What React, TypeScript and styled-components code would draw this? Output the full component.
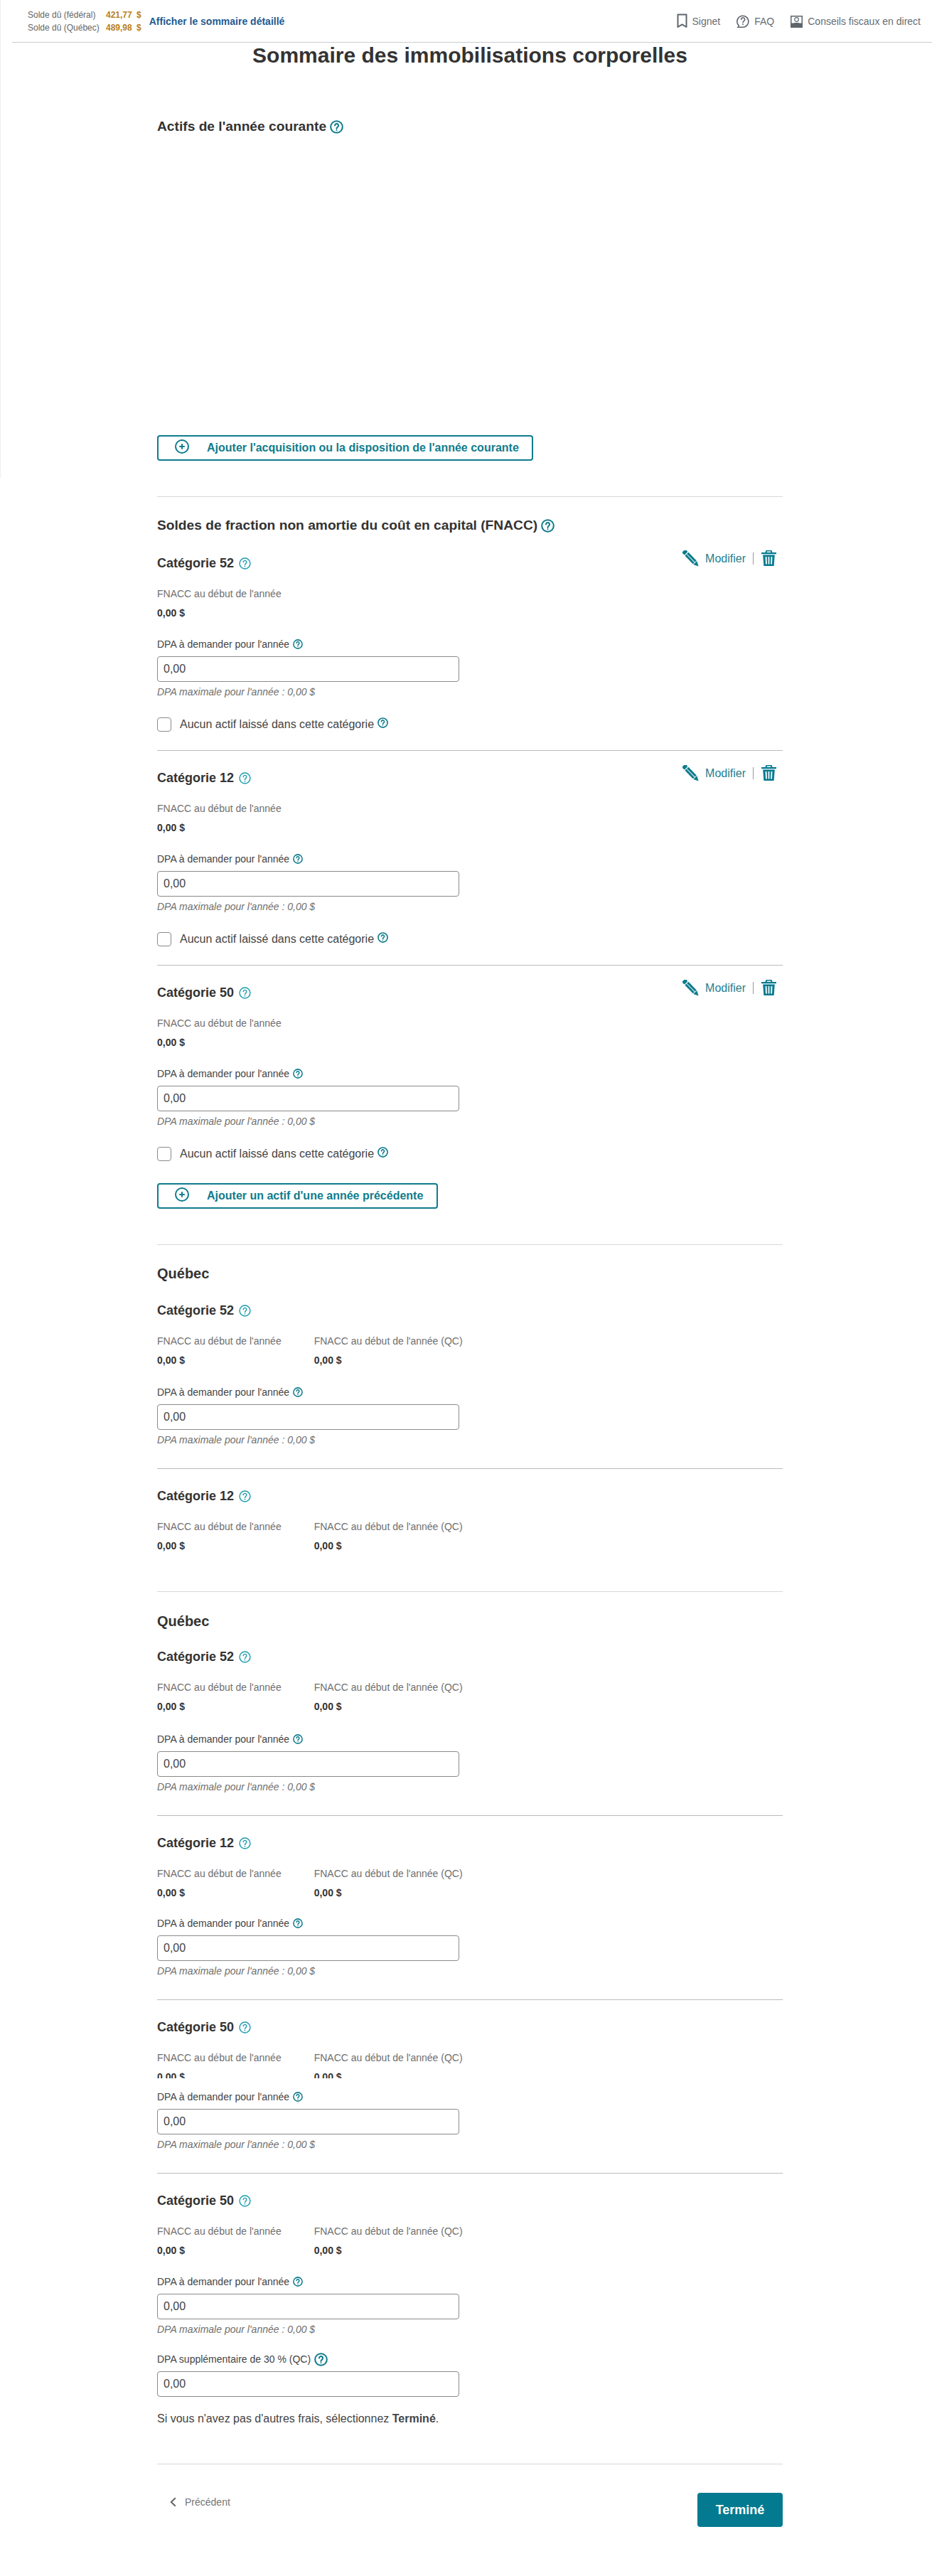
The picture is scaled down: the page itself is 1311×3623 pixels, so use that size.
import React, { FC } from 'react';
import styled, { createGlobalStyle } from 'styled-components';

const teal = '#0f7c8c';
const tealLink = '#1f7f8f';
const ink = '#333';

const GlobalStyle = createGlobalStyle`
  html, body {
    margin: 0;
    padding: 0;
    background: #fff;
    font-family: "Liberation Sans", Arial, sans-serif;
    color: ${ink};
  }
`;

const Page = styled.div`
  position: relative;
  width: 1311px;
  height: 3623px;
  overflow: hidden;

  &::before {
    content: '';
    position: absolute;
    top: 0;
    left: 0;
    width: 1px;
    height: 672px;
    background: #eee;
  }
`;

const TopBar = styled.header`
  display: flex;
  align-items: center;
  height: 59px;
  margin-left: 17px;
  padding: 0 16px 0 22px;
  border-bottom: 1px solid #c9cdd0;
`;

const Balances = styled.div`
  display: grid;
  grid-template-columns: 110px auto;
  row-gap: 4px;
  font-size: 12px;
  line-height: 14px;
`;

const BalanceLabel = styled.span`
  color: #666;
`;

const BalanceValue = styled.span`
  color: #b8811d;
  font-weight: bold;
  word-spacing: 3px;
`;

const SummaryLink = styled.a`
  margin-left: 11px;
  font-size: 14px;
  font-weight: bold;
  color: #1f5b93;
`;

const TopActions = styled.nav`
  display: flex;
  align-items: center;
  gap: 23px;
  margin-left: auto;
`;

const TopAction = styled.span`
  display: flex;
  align-items: center;
  gap: 7px;
  font-size: 14px;
  color: #666d73;
`;

const Main = styled.main`
  width: 880px;
  margin-left: 221px;
`;

const Title = styled.h1`
  margin: 0 -100px;
  height: 36px;
  font-size: 30px;
  line-height: 36px;
  font-weight: bold;
  text-align: center;
  color: ${ink};
`;

const SectionHeading = styled.h2<{ $top: number; $size?: number }>`
  display: flex;
  align-items: center;
  gap: 5px;
  margin: ${({ $top }) => $top}px 0 0;
  font-size: ${({ $size }) => $size || 19.2}px;
  line-height: 24px;
  font-weight: bold;
`;

const OutlineButton = styled.button<{ $width: number; $top: number }>`
  display: flex;
  align-items: center;
  width: ${({ $width }) => $width}px;
  height: 36px;
  margin-top: ${({ $top }) => $top}px;
  padding: 0 0 0 23px;
  background: #fff;
  border: 2px solid ${teal};
  border-radius: 4px;
  font-family: inherit;
  font-size: 16px;
  font-weight: bold;
  color: ${teal};

  svg {
    margin: -4px 25px 0 0;
  }
`;

const Divider = styled.hr<{ $top: number; $tone?: string }>`
  height: 1px;
  margin: ${({ $top }) => $top}px 0 0;
  border: 0;
  background: ${({ $tone }) => $tone || '#d8d8d8'};
`;

const CategoryHead = styled.div<{ $top: number }>`
  display: flex;
  align-items: center;
  justify-content: space-between;
  height: 22px;
  margin-top: ${({ $top }) => $top}px;
`;

const CategoryName = styled.h3`
  display: flex;
  align-items: center;
  gap: 7px;
  margin: 0;
  font-size: 18px;
  line-height: 22px;
  font-weight: bold;
`;

const EditTools = styled.div`
  display: flex;
  align-items: center;
  margin: -14px 9px 0 0;
  font-size: 16px;
  color: ${tealLink};
`;

const EditLabel = styled.span`
  margin: 0 11px 0 8px;
  padding-right: 10px;
  border-right: 1px solid #999;
  line-height: 17px;
`;

const Figures = styled.div<{ $clip?: boolean }>`
  display: flex;
  gap: 46px;
  margin-top: 24px;
  height: ${({ $clip }) => ($clip ? '37px' : '43px')};
  overflow: hidden;
`;

const Figure = styled.div`
  display: flex;
  flex-direction: column;
  gap: 11px;
  min-width: 174px;
`;

const FigureLabel = styled.span`
  font-size: 14px;
  line-height: 16px;
  color: #6f6f6f;
`;

const FigureValue = styled.strong`
  font-size: 14px;
  line-height: 16px;
`;

const FieldLabel = styled.label<{ $top: number }>`
  display: flex;
  align-items: center;
  gap: 5px;
  height: 16px;
  margin-top: ${({ $top }) => $top}px;
  font-size: 14px;
  color: #444;
`;

const AmountInput = styled.input`
  display: block;
  box-sizing: border-box;
  width: 425px;
  height: 36px;
  margin-top: 9px;
  padding: 0 8px;
  border: 1px solid #8a8a8a;
  border-radius: 4px;
  font-family: inherit;
  font-size: 16px;
  color: #444;
`;

const Hint = styled.div`
  margin-top: 6px;
  font-size: 14px;
  line-height: 16px;
  font-style: italic;
  color: #6f6f6f;
`;

const CheckRow = styled.label`
  display: flex;
  align-items: center;
  gap: 12px;
  margin-top: 28px;
  font-size: 16px;
  line-height: 20px;
  color: #444;
`;

const CheckBox = styled.span`
  box-sizing: border-box;
  width: 20px;
  height: 20px;
  border: 1px solid #8a8a8a;
  border-radius: 4px;
`;

const CheckText = styled.span`
  display: flex;
  align-items: center;
  gap: 5px;

  svg {
    margin-top: -6px;
  }
`;

const Outro = styled.p`
  margin: 21px 0 0;
  font-size: 16px;
  line-height: 20px;
  color: #444;
`;

const Footer = styled.footer`
  display: flex;
  align-items: center;
  justify-content: space-between;
  height: 48px;
  margin-top: 40px;
`;

const BackLink = styled.a`
  display: flex;
  align-items: center;
  gap: 12px;
  margin: -22px 0 0 18px;
  font-size: 14px;
  color: #757575;
`;

const DoneButton = styled.button`
  width: 120px;
  height: 48px;
  border: 0;
  border-radius: 4px;
  background: #037a8f;
  font-family: inherit;
  font-size: 18px;
  font-weight: bold;
  color: #fff;
`;

const Help: FC<{ size?: number; color?: string; weight?: number }> = ({ size = 17, color = '#1c9cad', weight = 2 }) => (
  <svg width={size} height={size} viewBox="0 0 24 24" fill="none" stroke={color} strokeWidth={weight}>
    <circle cx="12" cy="12" r="10.5" />
    <path d="M8.8 9.4a3.2 3.2 0 1 1 5 2.7c-1.2.8-1.8 1.4-1.8 2.9" strokeLinecap="round" />
    <circle cx="12" cy="18" r="1.2" fill={color} stroke="none" />
  </svg>
);

const Plus = () => (
  <svg width="20" height="20" viewBox="0 0 20 20" fill="none" stroke={teal} strokeWidth="2">
    <circle cx="10" cy="10" r="9" />
    <path d="M10 6.2v7.6M6.2 10h7.6" />
  </svg>
);

const Pencil = () => (
  <svg width="24" height="23" viewBox="0 0 24 23" fill={teal}>
    <g transform="rotate(46 12 11.5)">
      <rect x="-3" y="8" width="5" height="7" rx="1.6" />
      <path d="M3.2 8h16.3v7H3.2z" />
      <path d="M3.2 11.1h16.3v.9H3.2z" fill="#fff" />
      <path d="M20.4 8l6.8 3.5-6.8 3.5z" />
    </g>
  </svg>
);

const Trash = () => (
  <svg width="21" height="22" viewBox="0 0 21 22" fill="#037a8f">
    <path d="M6.5 0h8l1 3H21v2.2H0V3h5.5zM8 1.4 7.6 3h5.8L13 1.4z" fillRule="evenodd" />
    <path d="M2.2 6.5h16.6L17.6 22H3.4zM5.6 9l.4 10.4h1.8L7.5 9zm4 0v10.4h1.8V9zm3.9 0-.3 10.4H15L15.4 9z" fillRule="evenodd" />
  </svg>
);

const Bookmark = () => (
  <svg width="15" height="21" viewBox="0 0 15 21" fill="none" stroke="#5f666c" strokeWidth="2">
    <path d="M1.5 1.5h12v17.5l-6-3.6-6 3.6z" strokeLinejoin="round" />
  </svg>
);

const Faq = () => (
  <svg width="18" height="21" viewBox="0 0 18 21" fill="none" stroke="#5f666c" strokeWidth="1.6">
    <path d="M3.2 17A8 8 0 1 1 9 19.3H2.2c.7-.6 1-1.3 1-2.3z" />
    <path d="M6.6 8.4a2.5 2.5 0 1 1 3.9 2c-1 .7-1.5 1.2-1.5 2.3" strokeLinecap="round" />
    <circle cx="9" cy="15.2" r=".9" fill="#5f666c" stroke="none" />
  </svg>
);

const Advisor = () => (
  <svg width="17" height="18" viewBox="0 0 17 18" fill="#5f666c">
    <path d="M0 1h17v17H0zm1.5 1.5v9h14v-9z" fillRule="evenodd" />
    <circle cx="8.5" cy="6.5" r="2.8" fill="none" stroke="#5f666c" strokeWidth="1.2" />
    <path d="M2 17v-3.6l4-2.4h5l4 2.4V17z" />
  </svg>
);

const Chevron = () => (
  <svg width="9" height="14" viewBox="0 0 9 14" fill="none" stroke="#666" strokeWidth="2">
    <path d="M7.8 1.2 1.8 7l6 5.8" />
  </svg>
);

const AmountField: FC<{ top: number }> = ({ top }) => (
  <>
    <FieldLabel $top={top}>
      DPA à demander pour l'année <Help size={14} color={teal} weight={2.6} />
    </FieldLabel>
    <AmountInput defaultValue="0,00" />
    <Hint>DPA maximale pour l'année : 0,00 $</Hint>
  </>
);

const EditableCategory: FC<{ name: string; top: number }> = ({ name, top }) => (
  <>
    <CategoryHead $top={top}>
      <CategoryName>
        Catégorie {name} <Help />
      </CategoryName>
      <EditTools>
        <Pencil />
        <EditLabel>Modifier</EditLabel>
        <Trash />
      </EditTools>
    </CategoryHead>
    <Figures>
      <Figure>
        <FigureLabel>FNACC au début de l'année</FigureLabel>
        <FigureValue>0,00 $</FigureValue>
      </Figure>
    </Figures>
    <AmountField top={28} />
    <CheckRow>
      <CheckBox />
      <CheckText>
        Aucun actif laissé dans cette catégorie <Help size={15} color={teal} weight={2.6} />
      </CheckText>
    </CheckRow>
  </>
);

const QuebecHead: FC<{ name: string; top: number; clip?: boolean }> = ({ name, top, clip }) => (
  <>
    <CategoryHead $top={top}>
      <CategoryName>
        Catégorie {name} <Help />
      </CategoryName>
    </CategoryHead>
    <Figures $clip={clip}>
      <Figure>
        <FigureLabel>FNACC au début de l'année</FigureLabel>
        <FigureValue>0,00 $</FigureValue>
      </Figure>
      <Figure>
        <FigureLabel>FNACC au début de l'année (QC)</FigureLabel>
        <FigureValue>0,00 $</FigureValue>
      </Figure>
    </Figures>
  </>
);

export default function App() {
  return (
    <Page>
      <GlobalStyle />
      <TopBar>
        <Balances>
          <BalanceLabel>Solde dû (fédéral)</BalanceLabel>
          <BalanceValue>421,77 $</BalanceValue>
          <BalanceLabel>Solde dû (Québec)</BalanceLabel>
          <BalanceValue>489,98 $</BalanceValue>
        </Balances>
        <SummaryLink>Afficher le sommaire détaillé</SummaryLink>
        <TopActions>
          <TopAction>
            <Bookmark /> Signet
          </TopAction>
          <TopAction>
            <Faq /> FAQ
          </TopAction>
          <TopAction>
            <Advisor /> Conseils fiscaux en direct
          </TopAction>
        </TopActions>
      </TopBar>
      <Main>
        <Title>Sommaire des immobilisations corporelles</Title>
        <SectionHeading $top={70}>
          Actifs de l'année courante <Help size={19} color={teal} weight={2.6} />
        </SectionHeading>
        <OutlineButton $width={529} $top={422}>
          <Plus /> Ajouter l'acquisition ou la disposition de l'année courante
        </OutlineButton>
        <Divider $top={50} />
        <SectionHeading $top={28}>
          Soldes de fraction non amortie du coût en capital (FNACC) <Help size={19} color={teal} weight={2.6} />
        </SectionHeading>
        <EditableCategory name="52" top={30} />
        <Divider $top={26} $tone="#bbb" />
        <EditableCategory name="12" top={27} />
        <Divider $top={26} $tone="#bbb" />
        <EditableCategory name="50" top={27} />
        <OutlineButton $width={395} $top={31}>
          <Plus /> Ajouter un actif d'une année précédente
        </OutlineButton>
        <Divider $top={50} />
        <SectionHeading $top={28} $size={20}>
          Québec
        </SectionHeading>
        <QuebecHead name="52" top={29} />
        <AmountField top={29} />
        <Divider $top={32} $tone="#bbb" />
        <QuebecHead name="12" top={27} />
        <Divider $top={56} />
        <SectionHeading $top={29} $size={20}>
          Québec
        </SectionHeading>
        <QuebecHead name="52" top={27} />
        <AmountField top={30} />
        <Divider $top={32} $tone="#bbb" />
        <QuebecHead name="12" top={27} />
        <AmountField top={27} />
        <Divider $top={32} $tone="#bbb" />
        <QuebecHead name="50" top={27} clip />
        <AmountField top={18} />
        <Divider $top={32} $tone="#bbb" />
        <QuebecHead name="50" top={27} />
        <AmountField top={28} />
        <FieldLabel $top={26}>
          DPA supplémentaire de 30 % (QC) <Help size={19} color={teal} weight={2.6} />
        </FieldLabel>
        <AmountInput defaultValue="0,00" />
        <Outro>
          Si vous n'avez pas d'autres frais, sélectionnez <strong>Terminé</strong>.
        </Outro>
        <Divider $top={53} />
        <Footer>
          <BackLink>
            <Chevron /> Précédent
          </BackLink>
          <DoneButton>Terminé</DoneButton>
        </Footer>
      </Main>
    </Page>
  );
}
